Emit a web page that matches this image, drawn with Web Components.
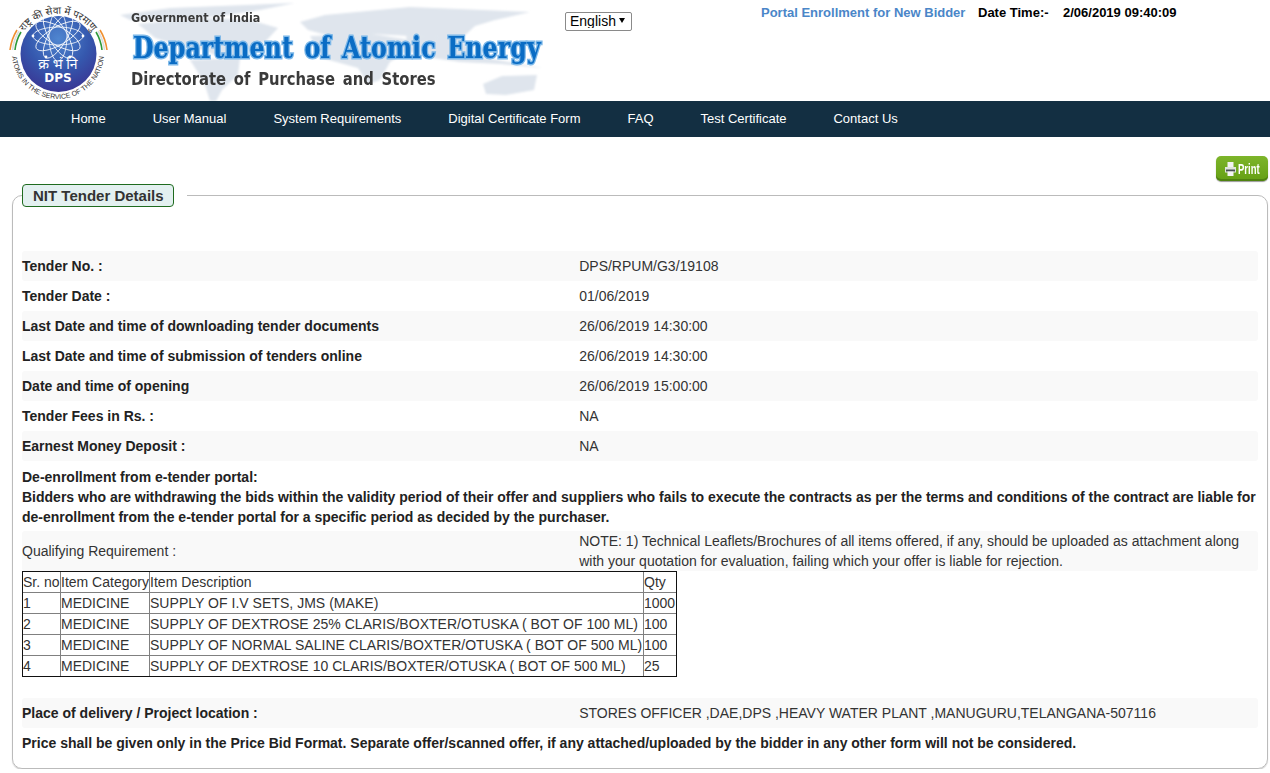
<!DOCTYPE html>
<html>
<head>
<meta charset="utf-8">
<title>NIT Tender Details</title>
<style>
    html, body { margin: 0; background: #fff; }
    body { font: 14px/20px "Liberation Sans", Arial, sans-serif; color: #333; overflow: hidden; }
</style>
</head>
<body>
<dps-header></dps-header>
<dps-nav>
    <a href="#">Home</a>
    <a href="#">User Manual</a>
    <a href="#">System Requirements</a>
    <a href="#">Digital Certificate Form</a>
    <a href="#">FAQ</a>
    <a href="#">Test Certificate</a>
    <a href="#">Contact Us</a>
</dps-nav>
<print-bar></print-bar>
<tender-panel title-text="NIT Tender Details">
    <detail-row shaded label="Tender No. :">DPS/RPUM/G3/19108</detail-row>
    <detail-row label="Tender Date :">01/06/2019</detail-row>
    <detail-row shaded label="Last Date and time of downloading tender documents">26/06/2019 14:30:00</detail-row>
    <detail-row label="Last Date and time of submission of tenders online">26/06/2019 14:30:00</detail-row>
    <detail-row shaded label="Date and time of opening">26/06/2019 15:00:00</detail-row>
    <detail-row label="Tender Fees in Rs. :">NA</detail-row>
    <detail-row shaded label="Earnest Money Deposit :">NA</detail-row>
    <note-block>De-enrollment from e-tender portal:<br>Bidders who are withdrawing the bids within the validity period of their offer and suppliers who fails to execute the contracts as per the terms and conditions of the contract are liable for de-enrollment from the e-tender portal for a specific period as decided by the purchaser.</note-block>
    <detail-row shaded plain label="Qualifying Requirement :">NOTE: 1) Technical Leaflets/Brochures of all items offered, if any, should be uploaded as attachment along with your quotation for evaluation, failing which your offer is liable for rejection.</detail-row>
    <item-table></item-table>
    <detail-row shaded label="Place of delivery / Project location :">STORES OFFICER ,DAE,DPS ,HEAVY WATER PLANT ,MANUGURU,TELANGANA-507116</detail-row>
    <note-block last>Price shall be given only in the Price Bid Format. Separate offer/scanned offer, if any attached/uploaded by the bidder in any other form will not be considered.</note-block>
</tender-panel>

<script>
class DpsHeader extends HTMLElement {
    constructor() {
        super();
        this.attachShadow({ mode: 'open' });
        this.shadowRoot.innerHTML = `
            <style>
                :host { display: flex; position: relative; height: 101px; overflow: hidden; background: #fff; }
                .map { position: absolute; left: 110px; top: 0; }
                .logo { position: relative; flex: none; width: 125px; height: 101px; }
                .titles { position: relative; flex: none; width: 434px; margin-left: 6px; font-family: "DejaVu Sans", sans-serif; font-weight: bold; color: #3a3a3a; }
                .gov { font-size: 12px; line-height: 14px; margin-top: 11px; white-space: nowrap; transform: scaleX(.93); transform-origin: left; }
                .dept { font-family: "DejaVu Serif", serif; font-size: 29px; line-height: 36px; margin: 5px 0 0 2px; white-space: nowrap; color: #0a6cc4; word-spacing: 4px;
                        -webkit-text-stroke: 3px #7db8e8; paint-order: stroke fill; transform: scaleX(.82); transform-origin: left; }
                .dir { font-size: 17px; line-height: 20px; margin-top: 3px; white-space: nowrap; word-spacing: 3px; transform: scaleX(.87); transform-origin: left; }
                .lang { position: relative; flex: none; margin: 12px 0 0 0; width: 67px; height: 19px; }
                select { appearance: none; -webkit-appearance: none; display: block; width: 67px; height: 19px; box-sizing: border-box; padding: 0 0 2px 4px; border: 1px solid #8a8a8a; border-radius: 2px;
                         background: #fff; color: #000; font: 14px "Liberation Sans", Arial, sans-serif; }
                .lang svg { position: absolute; right: 7px; top: 6px; pointer-events: none; }
                .info { position: relative; flex: none; margin: 5px 0 0 129px; display: flex; align-items: baseline; white-space: nowrap; font: bold 13px/16px "Liberation Sans", Arial, sans-serif; color: #000; }
                .portal { color: #4a86c8; width: 217px; }
                .dt { width: 85px; }
            </style>
            <svg class="map" width="440" height="101" viewBox="0 0 440 101">
                <defs><filter id="soft"><feGaussianBlur stdDeviation="1"/></filter></defs>
                <g fill="#dfe5ed" filter="url(#soft)">
                    <path d="M10 15 L60 8 L185 3 L150 10 L110 16 L60 20 L20 20Z"/>
                    <path d="M28 24 L90 18 L140 20 L168 28 L155 42 L135 50 L130 58 L110 58 L95 50 L70 46 L45 38Z"/>
                    <path d="M80 60 L130 58 L128 75 L112 90 L106 101 L100 101 L94 82Z"/>
                    <path d="M190 22 L215 15 L300 7 L420 12 L385 20 L365 26 L350 40 L330 38 L300 36 L262 34 L220 36 L198 30Z"/>
                    <path d="M200 36 L262 34 L300 40 L296 52 L280 62 L270 80 L258 84 L248 68 L212 58Z"/>
                    <path d="M296 36 L350 38 L365 56 L433 68 L390 64 L350 62 L322 58 L300 52Z"/>
                    <path d="M373 84 L392 76 L427 75 L424 90 L396 95 L376 94Z"/>
                </g>
            </svg>
            <svg class="logo" viewBox="0 0 125 101">
                <defs>
                    <radialGradient id="disc" cx=".5" cy=".3" r=".8">
                        <stop offset="0" stop-color="#4f86d0"/><stop offset=".5" stop-color="#3558ae"/><stop offset="1" stop-color="#3a2c8c"/>
                    </radialGradient>
                    <path id="arcTop" d="M20 38 A42 42 0 0 1 96 38"/>
                    <path id="arcBottom" d="M12 53 A46 46 0 0 0 104 53"/>
                </defs>
                <circle cx="58.5" cy="54" r="38" fill="url(#disc)"/>
                <g fill="none" stroke="#fff" stroke-width=".8">
                    <ellipse cx="58" cy="36" rx="25" ry="9"/>
                    <ellipse cx="58" cy="36" rx="25" ry="9" transform="rotate(30 58 36)"/>
                    <ellipse cx="58" cy="36" rx="25" ry="9" transform="rotate(60 58 36)"/>
                    <ellipse cx="58" cy="36" rx="25" ry="9" transform="rotate(90 58 36)"/>
                    <ellipse cx="58" cy="36" rx="25" ry="9" transform="rotate(120 58 36)"/>
                    <ellipse cx="58" cy="36" rx="25" ry="9" transform="rotate(150 58 36)"/>
                </g>
                <g fill="#fff">
                    <circle cx="33" cy="36" r="1.4"/><circle cx="83" cy="36" r="1.4"/><circle cx="46" cy="15" r="1.4"/><circle cx="70" cy="15" r="1.4"/><circle cx="46" cy="57" r="1.4"/><circle cx="70" cy="57" r="1.4"/>
                </g>
                <text x="58" y="69" text-anchor="middle" font-family="'Noto Sans','DejaVu Sans',sans-serif" font-size="14" fill="#fff">क्र भं नि</text>
                <text x="58" y="82" text-anchor="middle" font-family="'DejaVu Sans',sans-serif" font-weight="bold" font-size="12" fill="#fff">DPS</text>
                <text font-family="'Noto Sans','DejaVu Sans',sans-serif" font-size="10" fill="#333" text-anchor="middle"><textPath href="#arcTop" startOffset="50%">राष्ट्र की सेवा में परमाणु</textPath></text>
                <text font-family="'Liberation Sans',sans-serif" font-size="7" fill="#333" text-anchor="middle"><textPath href="#arcBottom" startOffset="50%">ATOMS IN THE SERVICE OF THE NATION</textPath></text>
                <g fill="none" stroke-width="1.6">
                    <path d="M10 50 A49 49 0 0 1 17 30" stroke="#f09030"/>
                    <path d="M12.5 50 A46 46 0 0 1 19 31" stroke="#ddd"/>
                    <path d="M15 50 A44 44 0 0 1 21 32" stroke="#2f9a3a"/>
                    <path d="M107 50 A49 49 0 0 0 100 30" stroke="#f09030"/>
                    <path d="M104.5 50 A46 46 0 0 0 98 31" stroke="#ddd"/>
                    <path d="M102 50 A44 44 0 0 0 96 32" stroke="#2f9a3a"/>
                </g>
            </svg>
            <div class="titles">
                <div class="gov">Government of India</div>
                <div class="dept">Department of Atomic Energy</div>
                <div class="dir">Directorate of Purchase and Stores</div>
            </div>
            <div class="lang">
                <select><option>English</option></select>
                <svg width="6" height="5" viewBox="0 0 6 5"><path d="M0 0H6L3 5Z" fill="#000"/></svg>
            </div>
            <div class="info">
                <span class="portal">Portal Enrollment for New Bidder</span>
                <span class="dt">Date Time:-</span>
                <span>2/06/2019 09:40:09</span>
            </div>
        `;
    }
}

class DpsNav extends HTMLElement {
    constructor() {
        super();
        this.attachShadow({ mode: 'open' });
        this.shadowRoot.innerHTML = `
            <style>
                :host { display: flex; align-items: center; gap: 47px; height: 36px; padding-left: 71px; background: #132f42; }
                ::slotted(a) { color: #fff; text-decoration: none; font-size: 13px; line-height: 36px; height: 36px; white-space: nowrap; }
            </style>
            <slot></slot>
        `;
    }
}

class PrintBar extends HTMLElement {
    constructor() {
        super();
        this.attachShadow({ mode: 'open' });
        this.shadowRoot.innerHTML = `
            <style>
                :host { display: flex; justify-content: flex-end; padding: 19px 2px 0 0; height: 25px; }
                button { display: flex; align-items: center; width: 52px; height: 25px; padding: 0 0 0 9px; border: 0; border-radius: 5px; color: #fff;
                         background: linear-gradient(#7db52a, #659f14); box-shadow: inset 0 -2px 0 #4f8210, 0 1px 1px #999; cursor: pointer; }
                span { display: inline-block; width: 30px; margin-left: 2px; font: bold 14px "Liberation Sans", Arial, sans-serif; text-align: left; transform: scaleX(.68); transform-origin: left; }
            </style>
            <button>
                <svg width="11" height="14" viewBox="0 0 11 14">
                    <path d="M2.5 0H8.5V5H2.5Z" fill="#f2f2f2"/>
                    <path d="M0 5H11V10.5H0Z" fill="#dfe5dc"/>
                    <path d="M1 7.5H10V9.5H1Z" fill="#4a4f55"/>
                    <path d="M2.5 9.5H8.5V14H2.5Z" fill="#f4f4f4"/>
                </svg>
                <span>Print</span>
            </button>
        `;
    }
}

class TenderPanel extends HTMLElement {
    constructor() {
        super();
        this.attachShadow({ mode: 'open' });
        this.shadowRoot.innerHTML = `
            <style>
                :host { display: block; padding: 3px 2px 0 12px; }
                fieldset { margin: 0; padding: 44px 9px 0; min-width: 0; height: 539px; border: 1px solid #bbb; border-radius: 10px; box-shadow: 0 1px 1px #ccc; box-sizing: content-box; }
                legend { padding: 0 13px 0 0; }
                .tab { display: block; padding: 0 9px 0 10px; height: 21px; line-height: 21px; border: 1px solid #1f6b1f; border-radius: 4px; background: #e3f0f0; color: #333; font-size: 15px; font-weight: bold; }
            </style>
            <fieldset>
                <legend><span class="tab"></span></legend>
                <slot></slot>
            </fieldset>
        `;
        this.shadowRoot.querySelector('.tab').textContent = this.getAttribute('title-text');
    }
}

class DetailRow extends HTMLElement {
    constructor() {
        super();
        this.attachShadow({ mode: 'open' });
        this.shadowRoot.innerHTML = `
            <style>
                :host { display: grid; grid-template-columns: 45% 55%; align-items: center; min-height: 30px; border-radius: 3px; }
                :host([shaded]) { background: #f9f9f9; }
                .label { font-weight: bold; color: #222; }
                :host([plain]) .label { font-weight: normal; color: #333; }
                .value { padding: 0 1px; color: #333; }
            </style>
            <div class="label"></div>
            <div class="value"><slot></slot></div>
        `;
        this.shadowRoot.querySelector('.label').textContent = this.getAttribute('label');
    }
}

class NoteBlock extends HTMLElement {
    constructor() {
        super();
        this.attachShadow({ mode: 'open' });
        this.shadowRoot.innerHTML = `
            <style>
                :host { display: block; padding: 6px 0 4px; font-weight: bold; color: #222; line-height: 20px; }
                :host([last]) { padding-top: 5px; }
            </style>
            <slot></slot>
        `;
    }
}

class ItemTable extends HTMLElement {
    constructor() {
        super();
        this.attachShadow({ mode: 'open' });
        const items = [
            ['1', 'MEDICINE', 'SUPPLY OF I.V SETS, JMS (MAKE)', '1000'],
            ['2', 'MEDICINE', 'SUPPLY OF DEXTROSE 25% CLARIS/BOXTER/OTUSKA ( BOT OF 100 ML)', '100'],
            ['3', 'MEDICINE', 'SUPPLY OF NORMAL SALINE CLARIS/BOXTER/OTUSKA ( BOT OF 500 ML)', '100'],
            ['4', 'MEDICINE', 'SUPPLY OF DEXTROSE 10 CLARIS/BOXTER/OTUSKA ( BOT OF 500 ML)', '25']
        ];
        const rows = items.map((row) => `<tr>${row.map((cell) => `<td>${cell}</td>`).join('')}</tr>`).join('');
        this.shadowRoot.innerHTML = `
            <style>
                :host { display: block; margin-bottom: 21px; }
                table { table-layout: fixed; width: 655px; border-collapse: separate; border-spacing: 0; border: 1px solid #111; color: #333; font-size: 14px; line-height: 20px; }
                td, th { padding: 0; border-right: 1px solid #808080; border-bottom: 1px solid #808080; font-weight: normal; text-align: left; white-space: nowrap; height: 20px; overflow: hidden; }
                td:nth-child(3), th:nth-child(3) { letter-spacing: .03px; }
                td:last-child, th:last-child { border-right: 0; }
                tr:last-child td { border-bottom: 0; }
            </style>
            <table>
                <colgroup><col style="width: 38px"><col style="width: 89px"><col style="width: 494px"><col></colgroup>
                <tr><th>Sr. no</th><th>Item Category</th><th>Item Description</th><th>Qty</th></tr>
                ${rows}
            </table>
        `;
    }
}

customElements.define('dps-header', DpsHeader);
customElements.define('dps-nav', DpsNav);
customElements.define('print-bar', PrintBar);
customElements.define('tender-panel', TenderPanel);
customElements.define('detail-row', DetailRow);
customElements.define('note-block', NoteBlock);
customElements.define('item-table', ItemTable);
</script>
</body>
</html>
